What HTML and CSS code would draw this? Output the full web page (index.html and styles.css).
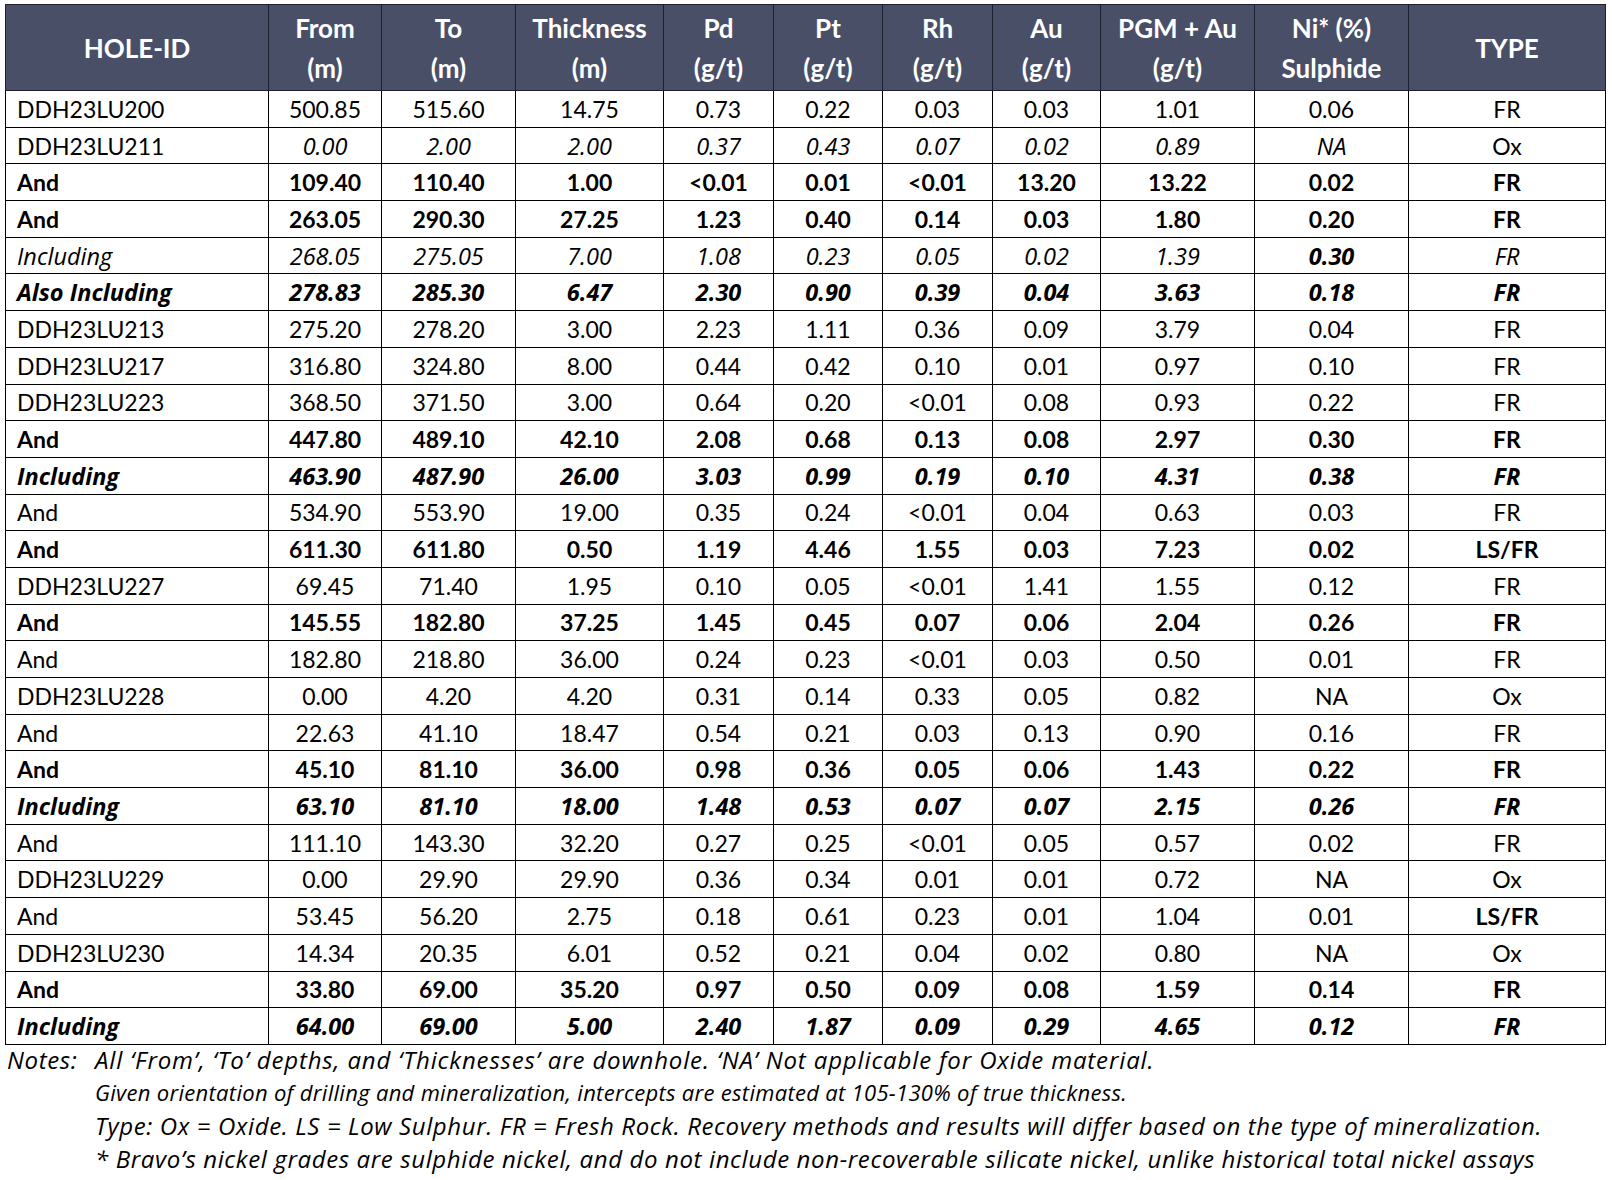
FILE: index.html
```html
<!DOCTYPE html>
<html lang="en">
<head>
<meta charset="utf-8">
<title>Drill results</title>
<link rel="stylesheet" href="styles.css">
</head>
<body>
<table class="results">
<colgroup>
<col class="c-id"><col class="c-from"><col class="c-to"><col class="c-thk"><col class="c-pd"><col class="c-pt"><col class="c-rh"><col class="c-au"><col class="c-pgm"><col class="c-ni"><col class="c-type">
</colgroup>
<thead>
<tr>
<th>HOLE-ID</th><th>From<br>(m)</th><th>To<br>(m)</th><th>Thickness<br>(m)</th><th>Pd<br>(g/t)</th><th>Pt<br>(g/t)</th><th>Rh<br>(g/t)</th><th>Au<br>(g/t)</th><th>PGM + Au<br>(g/t)</th><th>Ni* (%)<br>Sulphide</th><th>TYPE</th>
</tr>
</thead>
<tbody>
<tr><td>DDH23LU200</td><td>500.85</td><td>515.60</td><td>14.75</td><td>0.73</td><td>0.22</td><td>0.03</td><td>0.03</td><td>1.01</td><td>0.06</td><td>FR</td></tr>
<tr class="it"><td class="up">DDH23LU211</td><td>0.00</td><td>2.00</td><td>2.00</td><td>0.37</td><td>0.43</td><td>0.07</td><td>0.02</td><td>0.89</td><td>NA</td><td class="up">Ox</td></tr>
<tr class="b"><td>And</td><td>109.40</td><td>110.40</td><td>1.00</td><td>&lt;0.01</td><td>0.01</td><td>&lt;0.01</td><td>13.20</td><td>13.22</td><td>0.02</td><td>FR</td></tr>
<tr class="b"><td>And</td><td>263.05</td><td>290.30</td><td>27.25</td><td>1.23</td><td>0.40</td><td>0.14</td><td>0.03</td><td>1.80</td><td>0.20</td><td>FR</td></tr>
<tr class="it"><td>Including</td><td>268.05</td><td>275.05</td><td>7.00</td><td>1.08</td><td>0.23</td><td>0.05</td><td>0.02</td><td>1.39</td><td class="bo">0.30</td><td>FR</td></tr>
<tr class="b it"><td>Also Including</td><td>278.83</td><td>285.30</td><td>6.47</td><td>2.30</td><td>0.90</td><td>0.39</td><td>0.04</td><td>3.63</td><td>0.18</td><td>FR</td></tr>
<tr><td>DDH23LU213</td><td>275.20</td><td>278.20</td><td>3.00</td><td>2.23</td><td>1.11</td><td>0.36</td><td>0.09</td><td>3.79</td><td>0.04</td><td>FR</td></tr>
<tr><td>DDH23LU217</td><td>316.80</td><td>324.80</td><td>8.00</td><td>0.44</td><td>0.42</td><td>0.10</td><td>0.01</td><td>0.97</td><td>0.10</td><td>FR</td></tr>
<tr><td>DDH23LU223</td><td>368.50</td><td>371.50</td><td>3.00</td><td>0.64</td><td>0.20</td><td>&lt;0.01</td><td>0.08</td><td>0.93</td><td>0.22</td><td>FR</td></tr>
<tr class="b"><td>And</td><td>447.80</td><td>489.10</td><td>42.10</td><td>2.08</td><td>0.68</td><td>0.13</td><td>0.08</td><td>2.97</td><td>0.30</td><td>FR</td></tr>
<tr class="b it"><td>Including</td><td>463.90</td><td>487.90</td><td>26.00</td><td>3.03</td><td>0.99</td><td>0.19</td><td>0.10</td><td>4.31</td><td>0.38</td><td>FR</td></tr>
<tr><td>And</td><td>534.90</td><td>553.90</td><td>19.00</td><td>0.35</td><td>0.24</td><td>&lt;0.01</td><td>0.04</td><td>0.63</td><td>0.03</td><td>FR</td></tr>
<tr class="b"><td>And</td><td>611.30</td><td>611.80</td><td>0.50</td><td>1.19</td><td>4.46</td><td>1.55</td><td>0.03</td><td>7.23</td><td>0.02</td><td>LS/FR</td></tr>
<tr><td>DDH23LU227</td><td>69.45</td><td>71.40</td><td>1.95</td><td>0.10</td><td>0.05</td><td>&lt;0.01</td><td>1.41</td><td>1.55</td><td>0.12</td><td>FR</td></tr>
<tr class="b"><td>And</td><td>145.55</td><td>182.80</td><td>37.25</td><td>1.45</td><td>0.45</td><td>0.07</td><td>0.06</td><td>2.04</td><td>0.26</td><td>FR</td></tr>
<tr><td>And</td><td>182.80</td><td>218.80</td><td>36.00</td><td>0.24</td><td>0.23</td><td>&lt;0.01</td><td>0.03</td><td>0.50</td><td>0.01</td><td>FR</td></tr>
<tr><td>DDH23LU228</td><td>0.00</td><td>4.20</td><td>4.20</td><td>0.31</td><td>0.14</td><td>0.33</td><td>0.05</td><td>0.82</td><td>NA</td><td>Ox</td></tr>
<tr><td>And</td><td>22.63</td><td>41.10</td><td>18.47</td><td>0.54</td><td>0.21</td><td>0.03</td><td>0.13</td><td>0.90</td><td>0.16</td><td>FR</td></tr>
<tr class="b"><td>And</td><td>45.10</td><td>81.10</td><td>36.00</td><td>0.98</td><td>0.36</td><td>0.05</td><td>0.06</td><td>1.43</td><td>0.22</td><td>FR</td></tr>
<tr class="b it"><td>Including</td><td>63.10</td><td>81.10</td><td>18.00</td><td>1.48</td><td>0.53</td><td>0.07</td><td>0.07</td><td>2.15</td><td>0.26</td><td>FR</td></tr>
<tr><td>And</td><td>111.10</td><td>143.30</td><td>32.20</td><td>0.27</td><td>0.25</td><td>&lt;0.01</td><td>0.05</td><td>0.57</td><td>0.02</td><td>FR</td></tr>
<tr><td>DDH23LU229</td><td>0.00</td><td>29.90</td><td>29.90</td><td>0.36</td><td>0.34</td><td>0.01</td><td>0.01</td><td>0.72</td><td>NA</td><td>Ox</td></tr>
<tr><td>And</td><td>53.45</td><td>56.20</td><td>2.75</td><td>0.18</td><td>0.61</td><td>0.23</td><td>0.01</td><td>1.04</td><td>0.01</td><td class="bo">LS/FR</td></tr>
<tr><td>DDH23LU230</td><td>14.34</td><td>20.35</td><td>6.01</td><td>0.52</td><td>0.21</td><td>0.04</td><td>0.02</td><td>0.80</td><td>NA</td><td>Ox</td></tr>
<tr class="b"><td>And</td><td>33.80</td><td>69.00</td><td>35.20</td><td>0.97</td><td>0.50</td><td>0.09</td><td>0.08</td><td>1.59</td><td>0.14</td><td>FR</td></tr>
<tr class="b it"><td>Including</td><td>64.00</td><td>69.00</td><td>5.00</td><td>2.40</td><td>1.87</td><td>0.09</td><td>0.29</td><td>4.65</td><td>0.12</td><td>FR</td></tr>
</tbody>
</table>
<div class="notes">
<div class="note-first"><span class="note-label">Notes:</span><span class="note-wide">All ‘From’, ‘To’ depths, and ‘Thicknesses’ are downhole. ‘NA’ Not applicable for Oxide material.</span></div>
<div class="note-line note-small">Given orientation of drilling and mineralization, intercepts are estimated at 105-130% of true thickness.</div>
<div class="note-line">Type: Ox = Oxide. LS = Low Sulphur. FR = Fresh Rock. Recovery methods and results will differ based on the type of mineralization.</div>
<div class="note-line">* Bravo’s nickel grades are sulphide nickel, and do not include non-recoverable silicate nickel, unlike historical total nickel assays</div>
</div>
</body>
</html>
```

FILE: styles.css
```css
html, body {
  margin: 0;
  padding: 0;
  background: #ffffff;
}

body {
  font-family: Lato, "Open Sans", "Liberation Sans", sans-serif;
  color: #000000;
  padding: 4px 0 0 5px;
}

.results {
  border-collapse: collapse;
  table-layout: fixed;
  width: 1601px;
  font-size: 23px;
}

.c-id { width: 263px; }
.c-from { width: 113px; }
.c-to { width: 134px; }
.c-thk { width: 148px; }
.c-pd { width: 110px; }
.c-pt { width: 109px; }
.c-rh { width: 110px; }
.c-au { width: 108px; }
.c-pgm { width: 154px; }
.c-ni { width: 154px; }
.c-type { width: 197px; }

.results th {
  background: #4a4f68;
  color: #ffffff;
  font-weight: 700;
  font-size: 26px;
  line-height: 40px;
  height: 85px;
  padding: 0;
  text-align: center;
  vertical-align: middle;
  border: 1px solid #1e2030;
}

.results td {
  border: 1px solid #000000;
  height: 35.7px;
  padding: 0;
  text-align: center;
  vertical-align: middle;
  line-height: 30px;
  white-space: nowrap;
}

.results td:first-child {
  text-align: left;
  padding-left: 11px;
}

.results tr.b td { font-weight: 700; }
.results tr.it td {
  font-style: italic;
  font-family: "Open Sans", Lato, sans-serif;
  font-size: 23.5px;
}
.results tr.it td.up {
  font-style: normal;
  font-family: Lato, "Open Sans", sans-serif;
  font-size: 23px;
}
.results td.bo { font-weight: 700; }

.notes {
  font-family: "Open Sans", Lato, sans-serif;
  font-style: italic;
  font-size: 24px;
  line-height: 33px;
  letter-spacing: 0.62px;
  margin-top: -2px;
  margin-left: 2px;
}

.note-first {
  display: flex;
}

.note-label {
  width: 88px;
  flex: none;
}

.note-wide {
  letter-spacing: 0.85px;
}

.note-line {
  padding-left: 88px;
}

.note-small {
  font-size: 22px;
  letter-spacing: 0.3px;
}
```
